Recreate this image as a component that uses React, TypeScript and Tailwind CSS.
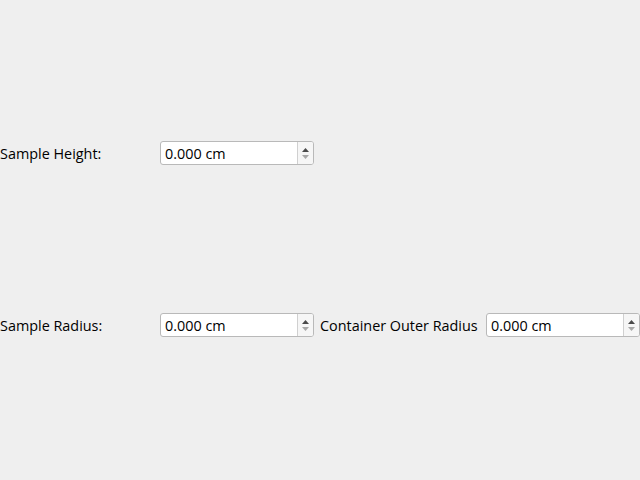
import React from "react";

function SpinBox() {
  return (
    <div className="flex h-[24px] w-[154px] rounded-[3px] border border-[#b9b9b9] bg-white">
      <div className="flex flex-1 items-center pl-[4px] pt-[1px] text-[14.4px] text-black">0.000 cm</div>
      <div className="flex w-[16px] flex-col items-center justify-center gap-[3px] border-l border-[#d0d0d0] bg-[#f6f6f6] rounded-r-[2px]">
        <svg width="7" height="4" viewBox="0 0 7 4">
          <path d="M0 4 L3.5 0 L7 4 Z" fill="#4a4a4a" />
        </svg>
        <svg width="7" height="4" viewBox="0 0 7 4">
          <path d="M0 0 L3.5 4 L7 0 Z" fill="#a8a8a8" />
        </svg>
      </div>
    </div>
  );
}

export default function App() {
  return (
    <div
      className="flex h-[480px] w-[640px] flex-col gap-[148px] bg-[#efefef] pt-[141px] text-[14.4px] text-black"
      style={{ fontFamily: '"Open Sans", "Noto Sans", sans-serif' }}
    >
      <div className="flex items-center">
        <div className="w-[160px] pt-[1px]">Sample Height:</div>
        <SpinBox />
      </div>
      <div className="flex items-center">
        <div className="w-[160px] pt-[1px]">Sample Radius:</div>
        <SpinBox />
        <div className="ml-[6px] w-[166px] pt-[1px]">Container Outer Radius</div>
        <SpinBox />
      </div>
    </div>
  );
}
